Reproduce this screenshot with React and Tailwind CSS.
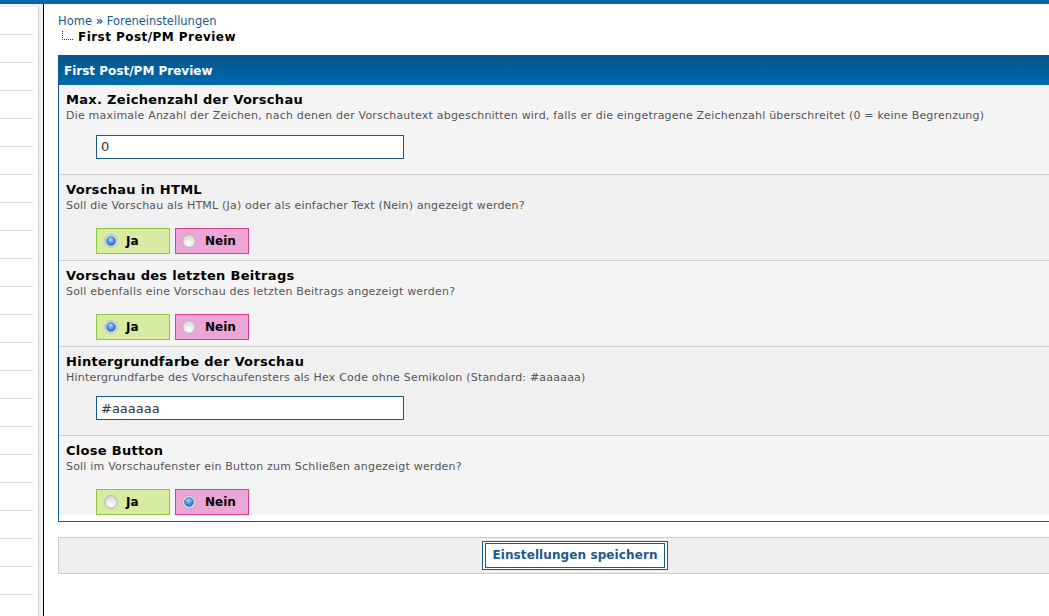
import React, { useState } from 'react';

function Radio({ checked }) {
  return (
    <svg width="14" height="14" viewBox="0 0 14 14" className="shrink-0">
      <defs>
        <radialGradient id="rOff" cx="50%" cy="70%" r="60%">
          <stop offset="0%" stopColor="#ffffff" />
          <stop offset="100%" stopColor="#d9d9d9" />
        </radialGradient>
        <radialGradient id="rOn" cx="45%" cy="35%" r="60%">
          <stop offset="0%" stopColor="#b8d6f8" />
          <stop offset="60%" stopColor="#4f8fe0" />
          <stop offset="100%" stopColor="#2f6cc0" />
        </radialGradient>
      </defs>
      <circle cx="7" cy="7" r="6.4" fill={checked ? '#e8eef6' : 'url(#rOff)'} stroke="#a8a8a8" strokeWidth="0.8" />
      {checked && <circle cx="7" cy="7" r="4.6" fill="url(#rOn)" stroke="#3a6fb5" strokeWidth="0.6" />}
    </svg>
  );
}

function YesNo({ initial }) {
  const [val, setVal] = useState(initial);
  return (
    <div className="ml-[37px] flex gap-[5px] mt-[14px] mb-[6px]">
      <label
        onClick={() => setVal('ja')}
        className="w-[74px] h-[26px] flex items-center gap-[8px] pl-[7px] bg-[#d8eba3] border border-[#8dc63f] text-[12px] font-bold text-black cursor-pointer"
      >
        <Radio checked={val === 'ja'} />
        <span>Ja</span>
      </label>
      <label
        onClick={() => setVal('nein')}
        className="w-[74px] h-[26px] flex items-center gap-[9px] pl-[6px] bg-[#eba6d6] border border-[#d9418f] text-[12px] font-bold text-black cursor-pointer"
      >
        <Radio checked={val === 'nein'} />
        <span>Nein</span>
      </label>
    </div>
  );
}

function TextField({ value }) {
  const [v, setV] = useState(value);
  return (
    <div className="ml-[37px] mt-[10px] mb-[15px]">
      <input
        value={v}
        onChange={(e) => setV(e.target.value)}
        className="w-[308px] h-[24px] border border-[#1a5a8a] bg-white px-[4px] text-[13px] text-[#333] outline-none"
        style={{ fontFamily: '"DejaVu Sans", Verdana, sans-serif' }}
      />
    </div>
  );
}

const rows = [
  {
    title: 'Max. Zeichenzahl der Vorschau',
    desc: 'Die maximale Anzahl der Zeichen, nach denen der Vorschautext abgeschnitten wird, falls er die eingetragene Zeichenzahl überschreitet (0 = keine Begrenzung)',
    type: 'text',
    value: '0',
  },
  {
    title: 'Vorschau in HTML',
    desc: 'Soll die Vorschau als HTML (Ja) oder als einfacher Text (Nein) angezeigt werden?',
    type: 'yesno',
    value: 'ja',
  },
  {
    title: 'Vorschau des letzten Beitrags',
    desc: 'Soll ebenfalls eine Vorschau des letzten Beitrags angezeigt werden?',
    type: 'yesno',
    value: 'ja',
  },
  {
    title: 'Hintergrundfarbe der Vorschau',
    desc: 'Hintergrundfarbe des Vorschaufensters als Hex Code ohne Semikolon (Standard: #aaaaaa)',
    type: 'text',
    value: '#aaaaaa',
  },
  {
    title: 'Close Button',
    desc: 'Soll im Vorschaufenster ein Button zum Schließen angezeigt werden?',
    type: 'yesno',
    value: 'nein',
  },
];

export default function App() {
  return (
    <div
      className="w-[1049px] h-[616px] overflow-hidden bg-white flex flex-col"
      style={{ fontFamily: '"DejaVu Sans", Verdana, sans-serif' }}
    >
      <div className="h-[4px] bg-[#0066a8] shrink-0" />
      <div className="flex flex-1 min-h-0">
        {/* sidebar */}
        <div className="w-[44px] shrink-0 bg-[#efefef] pt-[3px] border-r border-black">
          <div className="w-[39px] h-full bg-white border-r border-[#cccccc]">
            {Array.from({ length: 21 }).map((_, i) => (
              <div key={i} className="h-[28px] mr-[5px] border-b border-[#dddddd]" />
            ))}
          </div>
        </div>

        {/* main */}
        <div className="flex-1 min-w-0 pl-[14px] pt-[10px]">
          <div className="w-[1034px]">
            <div className="text-[11.5px] leading-[15px] text-[#1b5a8c]">
              <span>Home</span> <span className="font-bold">»</span> <span>Foreneinstellungen</span>
            </div>
            <div className="flex items-center h-[16px]">
              <svg width="20" height="12" viewBox="0 0 20 12" className="shrink-0">
                <path d="M4.5 0 V8.5 H16" stroke="#333" strokeWidth="1" strokeDasharray="1 1" fill="none" />
              </svg>
              <span className="text-[12px] font-bold text-black tracking-[0.45px]">First Post/PM Preview</span>
            </div>

            <div className="mt-[10px] border border-[#0f5a8c]">
              <div className="h-[29px] flex items-center px-[5px] bg-gradient-to-b from-[#05568a] to-[#0069ad] text-white text-[12px] font-bold">
                First Post/PM Preview
              </div>
              {rows.map((r, i) => (
                <div
                  key={i}
                  className={`pt-[7px] ${i < rows.length - 1 ? 'border-b border-[#cccccc]' : ''} ${i % 2 === 0 ? 'bg-[#f4f4f4]' : 'bg-[#f0f0f0]'}`}
                >
                  <div className="pl-[7px] text-[13px] tracking-[0.3px] leading-[16px] font-bold text-black">{r.title}</div>
                  <div className="pl-[7px] text-[11px] tracking-[0.2px] leading-[16px] text-[#555]">{r.desc}</div>
                  {r.type === 'text' ? <TextField value={r.value} /> : <YesNo initial={r.value} />}
                </div>
              ))}
            </div>

            <div className="mt-[15px] h-[37px] bg-[#efefef] border border-[#cccccc] flex items-center justify-center">
              <button className="h-[29px] px-[2px] border border-[#1b5a8c] bg-white">
                <span className="block h-[25px] leading-[23px] px-[6px] border border-[#1b5a8c] text-[12px] font-bold tracking-[0.1px] text-[#1b5a8c]">
                  Einstellungen speichern
                </span>
              </button>
            </div>
          </div>
        </div>
      </div>
    </div>
  );
}
